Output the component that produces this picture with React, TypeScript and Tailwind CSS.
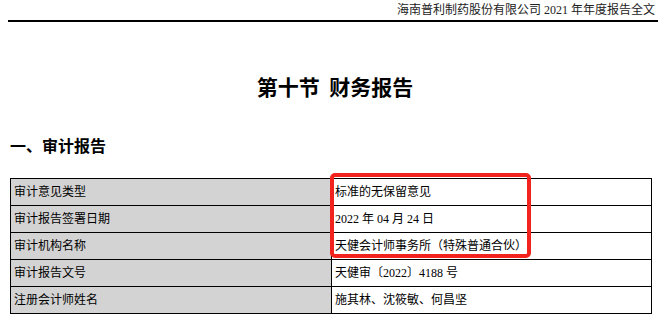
const rows = [
  ['审计意见类型', '标准的无保留意见'],
  ['审计报告签署日期', '2022 年 04 月 24 日'],
  ['审计机构名称', '天健会计师事务所（特殊普通合伙）'],
  ['审计报告文号', '天健审〔2022〕4188 号'],
  ['注册会计师姓名', '施其林、沈筱敏、何昌坚'],
];

const serif = "font-['Liberation_Serif','Noto_Sans_CJK_SC',serif]";

export default function App() {
  return (
    <div className={`relative h-[319px] w-[670px] overflow-hidden bg-white text-black ${serif}`}>
      <div className="ml-[8px] mr-[12px] flex justify-end border-b-2 border-black pb-[2px] pr-[3px] pt-[3px]">
        <div className="text-[12px] leading-[15px] text-[#222]">海南普利制药股份有限公司 2021 年年度报告全文</div>
      </div>

      <h1 className="mt-[51px] text-center font-['Noto_Sans_CJK_SC',sans-serif] text-[21px] font-bold leading-[26px]">
        第十节&nbsp;&nbsp;财务报告
      </h1>

      <h2 className="ml-[10px] mt-[36px] font-['Noto_Sans_CJK_SC',sans-serif] text-[16px] font-bold leading-[20px]">
        一、审计报告
      </h2>

      <div className="relative ml-[10px] mt-[23px] w-[642px]">
        <table className="w-full border-collapse text-[12px]">
          <tbody>
            {rows.map(([k, v]) => (
              <tr key={k} className="h-[27px]">
                <td className="w-[321px] border border-black bg-[#d3d3d3] px-[3px] py-0 leading-[14px]">{k}</td>
                <td className="border border-black px-[3px] py-0 leading-[14px]">{v}</td>
              </tr>
            ))}
          </tbody>
        </table>
        <div className="absolute left-[320px] top-[-5px] h-[85px] w-[201px] rounded-[5px] border-[4px] border-[#f2231c]" />
      </div>
    </div>
  );
}
